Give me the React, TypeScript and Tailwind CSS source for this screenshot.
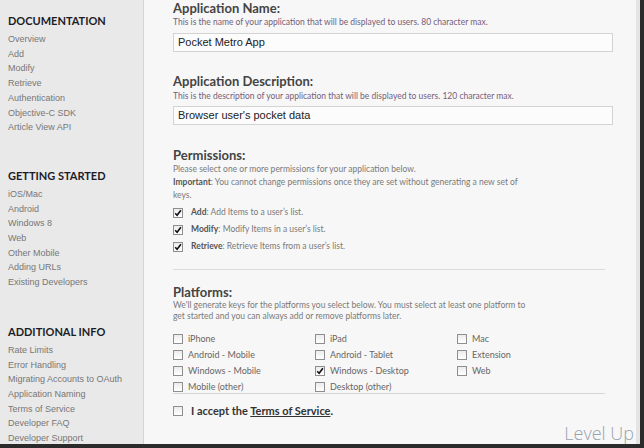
import React from 'react';

const sections = [
  {
    title: 'DOCUMENTATION',
    links: ['Overview', 'Add', 'Modify', 'Retrieve', 'Authentication', 'Objective-C SDK', 'Article View API'],
  },
  {
    title: 'GETTING STARTED',
    links: ['iOS/Mac', 'Android', 'Windows 8', 'Web', 'Other Mobile', 'Adding URLs', 'Existing Developers'],
  },
  {
    title: 'ADDITIONAL INFO',
    links: [
      'Rate Limits',
      'Error Handling',
      'Migrating Accounts to OAuth',
      'Application Naming',
      'Terms of Service',
      'Developer FAQ',
      'Developer Support',
    ],
  },
];

const permissions = [
  { name: 'Add', text: 'Add Items to a user\u2019s list.' },
  { name: 'Modify', text: 'Modify Items in a user\u2019s list.' },
  { name: 'Retrieve', text: 'Retrieve Items from a user\u2019s list.' },
];

const platforms = [
  { label: 'iPhone', checked: false },
  { label: 'iPad', checked: false },
  { label: 'Mac', checked: false },
  { label: 'Android - Mobile', checked: false },
  { label: 'Android - Tablet', checked: false },
  { label: 'Extension', checked: false },
  { label: 'Windows - Mobile', checked: false },
  { label: 'Windows - Desktop', checked: true },
  { label: 'Web', checked: false },
  { label: 'Mobile (other)', checked: false },
  { label: 'Desktop (other)', checked: false },
];

function Checkbox({ checked }: { checked: boolean }) {
  return (
    <span className="w-[10px] h-[10px] shrink-0 border border-[#8e8e8e] bg-gradient-to-b from-[#ececec] to-white flex items-center justify-center">
      {checked && (
        <svg width="8" height="8" viewBox="0 0 8 8">
          <path d="M1.2 4.2 L3.1 6.2 L6.9 1.3" fill="none" stroke="#111" strokeWidth="1.6" />
        </svg>
      )}
    </span>
  );
}

const heading = "font-['Lato',sans-serif] font-bold text-[13px] leading-[16px] text-[#444]";
const lato = "font-['Lato',sans-serif]";

export default function App(): React.ReactElement {
  return (
    <div className="relative w-[644px] h-[448px] overflow-hidden bg-[#2b2b2b] pr-[4px] pb-[4px] flex">
      <aside className="w-[144px] shrink-0 bg-[#e9e9e9] border-r border-[#d4d4d4] pl-2 pt-[14px] font-['Liberation_Sans',Arial,sans-serif]">
        {sections.map((s, i) => (
          <div key={s.title} className={i === 0 ? '' : i === 1 ? 'mt-[34px]' : 'mt-[35px]'}>
            <h3 className={`${lato} font-bold text-[11px] leading-[14px] text-[#1c1c26] mb-[4px]`}>{s.title}</h3>
            <ul>
              {s.links.map((l) => (
                <li key={l} className="text-[9px] leading-[14.7px] text-[#777] whitespace-nowrap">
                  {l}
                </li>
              ))}
            </ul>
          </div>
        ))}
      </aside>

      <main className="flex-1 bg-[#f7f7f7] border-r-[4px] border-[#e4e4e4] pl-[29px]">
        <h2 className={heading}>Application Name:</h2>
        <p className={`${lato} text-[8.5px] leading-[12px] text-[#74607a]`}>
          This is the name of your application that will be displayed to users. 80 character max.
        </p>
        <div className="mt-[5px] w-[440px] h-[19px] border border-[#d3d3d3] bg-[#fcfcfc] px-[4px] flex items-center font-['Liberation_Sans',Arial,sans-serif] text-[11px] text-[#222]">
          Pocket Metro App
        </div>

        <h2 className={`${heading} mt-[21px]`}>Application Description:</h2>
        <p className={`${lato} text-[8.5px] leading-[12px] text-[#74607a] mt-px`}>
          This is the description of your application that will be displayed to users. 120 character max.
        </p>
        <div className="mt-[4px] w-[440px] h-[19px] border border-[#d3d3d3] bg-[#fcfcfc] px-[4px] flex items-center font-['Liberation_Sans',Arial,sans-serif] text-[11px] text-[#222]">
          Browser user's pocket data
        </div>

        <h2 className={`${heading} mt-[22px]`}>Permissions:</h2>
        <div className={`${lato} text-[8.5px] leading-[13px] text-[#7a7a7a] w-[350px]`}>
          <p>Please select one or more permissions for your application below.</p>
          <p>
            <span className="font-bold text-[#555]">Important</span>: You cannot change permissions once they are set
            without generating a new set of keys.
          </p>
        </div>
        <div className="mt-[2px]">
          {permissions.map((p) => (
            <div key={p.name} className="h-[17px] flex items-center">
              <Checkbox checked />
              <span className={`${lato} ml-[8px] text-[8.5px] text-[#7a7a7a]`}>
                <span className="font-bold text-[#555]">{p.name}</span>: {p.text}
              </span>
            </div>
          ))}
        </div>

        <div className="mt-[14px] w-[432px] border-t border-[#dcdcdc]" />

        <h2 className={`${heading} mt-[14px]`}>Platforms:</h2>
        <div className={`${lato} text-[8.5px] leading-[11px] text-[#7a7a7a] w-[355px]`}>
          We'll generate keys for the platforms you select below. You must select at least one platform to get started
          and you can always add or remove platforms later.
        </div>
        <div className="mt-[10px] grid grid-cols-[142px_142px_142px] gap-y-[2px]">
          {platforms.map((p) => (
            <div key={p.label} className="h-[14px] flex items-center">
              <Checkbox checked={p.checked} />
              <span className={`${lato} ml-[5px] text-[9px] text-[#666]`}>{p.label}</span>
            </div>
          ))}
        </div>

        <div className="-mt-px w-[432px] border-t border-[#d6d6d6]" />

        <div className="mt-[10px] h-[14px] flex items-center">
          <Checkbox checked={false} />
          <span className={`${lato} ml-[8px] font-bold text-[11px] text-[#333]`}>
            I accept the <span className="underline">Terms of Service</span>.
          </span>
        </div>
      </main>

      <div className="absolute right-[10px] bottom-[6px] font-['Open_Sans',sans-serif] font-light text-[18px] leading-[18px] text-[#97a1ad] [text-shadow:0_0_1px_#fff]">
        Level Up
      </div>
    </div>
  );
}
